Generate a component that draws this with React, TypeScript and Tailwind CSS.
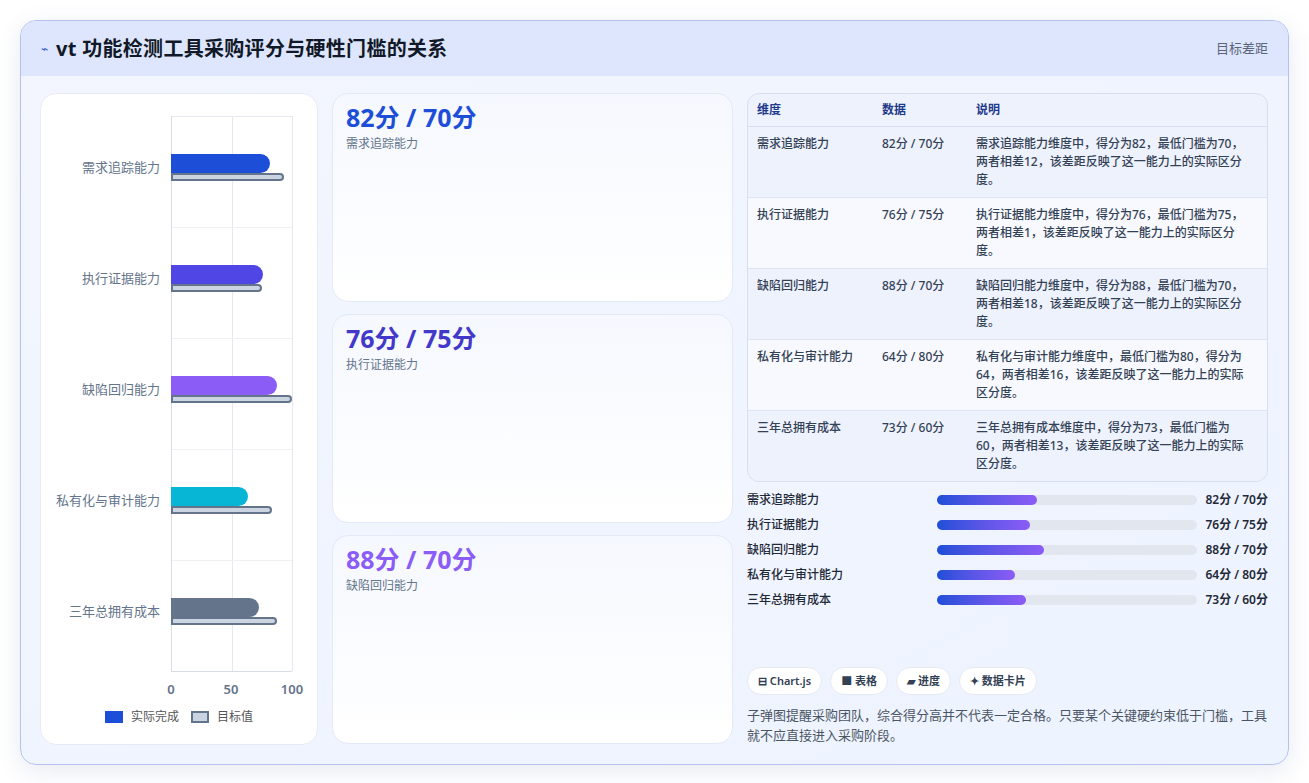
import React from 'react';

const rows = [
  { name: '需求追踪能力', a: 82, t: 70, bar: 'bg-[#1d4ed8]', tgtW: 113, actW: 99, fill: 100, desc: '需求追踪能力维度中，得分为82，最低门槛为70，两者相差12，该差距反映了这一能力上的实际区分度。' },
  { name: '执行证据能力', a: 76, t: 75, bar: 'bg-[#4f46e5]', tgtW: 91, actW: 92, fill: 93, desc: '执行证据能力维度中，得分为76，最低门槛为75，两者相差1，该差距反映了这一能力上的实际区分度。' },
  { name: '缺陷回归能力', a: 88, t: 70, bar: 'bg-[#8b5cf6]', tgtW: 121, actW: 106, fill: 107, desc: '缺陷回归能力维度中，得分为88，最低门槛为70，两者相差18，该差距反映了这一能力上的实际区分度。' },
  { name: '私有化与审计能力', a: 64, t: 80, bar: 'bg-[#06b6d4]', tgtW: 101, actW: 77, fill: 78, desc: '私有化与审计能力维度中，最低门槛为80，得分为64，两者相差16，该差距反映了这一能力上的实际区分度。' },
  { name: '三年总拥有成本', a: 73, t: 60, bar: 'bg-[#64748b]', tgtW: 106, actW: 88, fill: 89, desc: '三年总拥有成本维度中，得分为73，最低门槛为60，两者相差13，该差距反映了这一能力上的实际区分度。' },
];

const font = { fontFamily: "'Noto Sans', 'Noto Sans CJK SC', sans-serif" };

const cards = [
  { v: '82分 / 70分', l: '需求追踪能力', c: 'text-[#1d4ed8]' },
  { v: '76分 / 75分', l: '执行证据能力', c: 'text-[#4338ca]' },
  { v: '88分 / 70分', l: '缺陷回归能力', c: 'text-[#8b5cf6]' },
];

export default function App() {
  return (
    <div className="w-[1309px] h-[783px] bg-white p-5" style={font}>
      <div className="h-[745px] rounded-2xl border border-[#b6c2ec] bg-gradient-to-br from-[#f3f6fe] to-[#edf3ff] overflow-hidden flex flex-col shadow-[0_6px_24px_rgba(60,80,160,0.12)]">
        {/* Header */}
        <div className="h-[55px] shrink-0 bg-[#dde6fc] flex items-center justify-between px-5">
          <div className="flex items-center gap-2">
            <span className="text-[#3b5bdb] text-xs">⌁</span>
            <h1 className="text-[20px] font-bold text-[#111827] tracking-[0.3px]">vt 功能检测工具采购评分与硬性门槛的关系</h1>
          </div>
          <span className="text-[13px] text-[#5b6478]">目标差距</span>
        </div>

        {/* Body */}
        <div className="flex-1 flex gap-[14px] pl-[19px] pr-5 pt-[17px] pb-5">
          {/* Chart card */}
          <div className="w-[278px] h-[652px] bg-white rounded-2xl border border-[#e5eaf5] relative">
            <div className="absolute left-[130px] top-[22px] w-[121px] h-[556px] border-l border-b border-[#d7dce5]">
              <div className="absolute left-[60px] top-0 bottom-0 w-px bg-[#e5e8ee]" />
              <div className="absolute left-[120px] top-0 bottom-0 w-px bg-[#e5e8ee]" />
              <div className="absolute left-0 right-0 top-0 h-px bg-[#e5e8ee]" />
              {[111, 222, 333, 444].map((y) => (
                <div key={y} className="absolute left-0 right-0 h-px bg-[#eef0f4]" style={{ top: y }} />
              ))}
            </div>
            {rows.map((r, i) => (
              <div key={r.name} className="absolute left-0 w-[251px] flex items-center" style={{ top: 22 + i * 111 + 38 }}>
                <div className="w-[119px] text-right text-[13px] text-[#64748b]">{r.name}</div>
                <div className="ml-[11px] flex flex-col">
                  <div className={`h-[19px] rounded-r-[10px] ${r.bar}`} style={{ width: r.actW }} />
                  <div className="h-[8px] rounded-r bg-[#cbd5e1] border-2 border-[#64748b]" style={{ width: r.tgtW }} />
                </div>
              </div>
            ))}
            <div className="absolute top-[586px] left-[130px] text-[13px] font-semibold text-[#64748b]">
              <span className="absolute -translate-x-1/2 left-0">0</span>
              <span className="absolute -translate-x-1/2 left-[60px]">50</span>
              <span className="absolute -translate-x-1/2 left-[121px]">100</span>
            </div>
            <div className="absolute top-[614px] left-0 right-0 flex justify-center items-center gap-2 text-[12px] text-[#555]">
              <span className="w-[18px] h-[12px] bg-[#1d4ed8]" />
              <span>实际完成</span>
              <span className="w-[18px] h-[12px] bg-[#cbd5e1] border-2 border-[#64748b] ml-1" />
              <span>目标值</span>
            </div>
          </div>

          {/* Middle cards */}
          <div className="w-[401px] flex flex-col gap-3">
            {cards.map((c) => (
              <div key={c.l} className="h-[209px] rounded-2xl border border-[#e3e9f6] bg-gradient-to-b from-[#f5f8fe] to-white px-[13px] pt-[8px]">
                <div className={`text-[25px] font-bold leading-tight ${c.c}`}>{c.v}</div>
                <div className="text-[12px] text-[#64748b] mt-0.5">{c.l}</div>
              </div>
            ))}
          </div>

          {/* Right column */}
          <div className="flex-1 flex flex-col">
            <div className="rounded-xl border border-[#d6def0] overflow-hidden bg-[#eef2fd] text-[12px] font-medium">
              <div className="h-[33px] flex items-center text-[#1e3a8a] font-semibold border-b border-[#d6def0]">
                <div className="w-[134px] pl-[9px]">维度</div>
                <div className="w-[94px]">数据</div>
                <div>说明</div>
              </div>
              {rows.map((r, i) => (
                <div key={r.name} className={`flex py-[8px] text-[#334155] leading-[18px] ${i < 4 ? 'border-b border-[#dde3f0]' : ''} ${i % 2 ? 'bg-[#f7f9fe]' : 'bg-[#eef2fd]'}`}>
                  <div className="w-[134px] pl-[9px] shrink-0">{r.name}</div>
                  <div className="w-[94px] shrink-0">{r.a}分 / {r.t}分</div>
                  <div className="flex-1 pr-3">{r.desc}</div>
                </div>
              ))}
            </div>

            <div className="mt-[9px] flex flex-col gap-[7px] text-[12px] font-medium text-[#1f2937]">
              {rows.map((r) => (
                <div key={r.name} className="flex items-center h-[18px]">
                  <div className="w-[190px]">{r.name}</div>
                  <div className="w-[260px] h-[10px] rounded-full bg-[#e2e6ef]">
                    <div className="h-full rounded-full bg-gradient-to-r from-[#1d4ed8] to-[#8b5cf6]" style={{ width: r.fill }} />
                  </div>
                  <div className="flex-1 text-right font-semibold">{r.a}分 / {r.t}分</div>
                </div>
              ))}
            </div>

            <div className="mt-auto flex gap-2 text-[11px] font-semibold text-[#334155]">
              {['⊟ Chart.js', '■ 表格', '▰ 进度', '✦ 数据卡片'].map((c) => (
                <span key={c} className="h-[28px] px-2.5 rounded-full bg-white border border-[#e5e9f2] flex items-center">{c}</span>
              ))}
            </div>
            <p className="mt-[10px] text-[13px] leading-[20px] text-[#4b5563]">
              子弹图提醒采购团队，综合得分高并不代表一定合格。只要某个关键硬约束低于门槛，工具就不应直接进入采购阶段。
            </p>
          </div>
        </div>
      </div>
    </div>
  );
}
